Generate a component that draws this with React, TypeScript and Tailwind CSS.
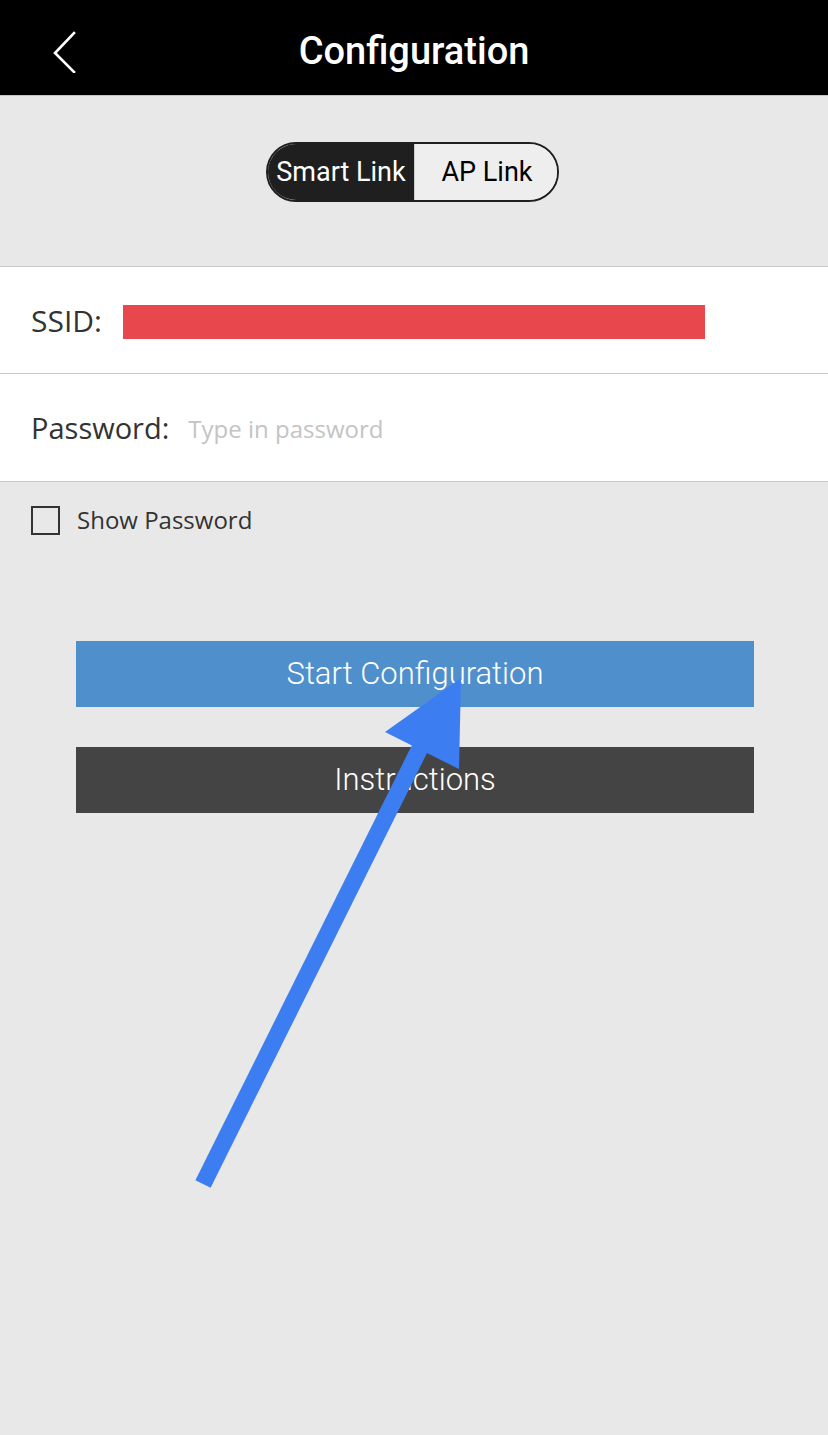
import { useState } from "react";

function BackChevron(): JSX.Element {
  return (
    <svg width="30" height="44" viewBox="0 0 30 44" fill="none">
      <path d="M21 4 L2 24 L21 43" stroke="#fff" strokeWidth="2.6" strokeLinecap="square" />
    </svg>
  );
}

function Arrow(): JSX.Element {
  // annotation arrow drawn over the page
  return (
    <svg className="pointer-events-none absolute left-0 top-0" width="828" height="1435" viewBox="0 0 828 1435">
      <line x1="420" y1="748" x2="203" y2="1184" stroke="#3c7ef2" strokeWidth="17" />
      <polygon points="461,678 385,732 459,769" fill="#3c7ef2" />
    </svg>
  );
}

export default function App(): JSX.Element {
  const [mode, setMode] = useState<"smart" | "ap">("smart");
  const [showPassword, setShowPassword] = useState(false);

  return (
    <div className="relative min-h-[1435px] w-full bg-[#e8e8e8] font-['Roboto','Liberation_Sans',sans-serif]">
      <header className="relative flex h-[96px] items-center justify-center border-b border-[#c6c6c6] bg-black">
        <button className="absolute left-[53px] top-[29px]">
          <BackChevron />
        </button>
        <h1 className="pt-[8px] text-[38px] font-medium text-white">Configuration</h1>
      </header>

      <div className="flex justify-center pr-[3px] pt-[46px] pb-[64px]">
        <div className="flex h-[60px] w-[293px] overflow-hidden rounded-full border-2 border-[#1f1f1f] text-[27px]">
          <button
            onClick={() => setMode("smart")}
            className={`flex w-[147px] items-center justify-center border-r border-[#cfcfcf] ${mode === "smart" ? "bg-[#1f1f1f] text-white" : "bg-[#eeeeee] text-black"}`}
          >
            Smart Link
          </button>
          <button
            onClick={() => setMode("ap")}
            className={`flex flex-1 items-center justify-center pl-[2px] ${mode === "ap" ? "bg-[#1f1f1f] text-white" : "bg-[#eeeeee] text-black"}`}
          >
            AP Link
          </button>
        </div>
      </div>

      <div className="border-t border-[#c8c8c8] bg-white font-['Open_Sans','Noto_Sans',sans-serif] text-[#333]">
        <div className="flex h-[107px] items-center border-b border-[#c8c8c8] pl-[31px]">
          <span className="text-[30px]">SSID:</span>
          <div className="ml-[21px] mt-[4px] h-[34px] w-[582px] bg-[#e8474d]" />
        </div>
        <div className="flex h-[108px] items-center border-b border-[#c8c8c8] pl-[31px]">
          <span className="text-[29px]">Password:</span>
          <input
            type={showPassword ? "text" : "password"}
            placeholder="Type in password"
            className="ml-[19px] flex-1 bg-transparent pt-[2px] text-[24px] outline-none placeholder:text-[#c4c4c4]"
          />
        </div>
      </div>

      <label className="flex items-center gap-[17px] pl-[31px] pt-[20px] font-['Open_Sans','Noto_Sans',sans-serif] text-[24px] text-[#333]">
        <span
          onClick={() => setShowPassword(!showPassword)}
          className="block h-[29px] w-[29px] border-2 border-[#333]"
        />
        Show Password
      </label>

      <div className="flex flex-col gap-[40px] pl-[76px] pr-[74px] pt-[103px]">
        <button className="flex h-[66px] items-center justify-center bg-[#4f90cc] text-[31px] font-light text-white">
          Start Configuration
        </button>
        <button className="flex h-[66px] items-center justify-center bg-[#444444] text-[31px] font-light text-white">
          Instructions
        </button>
      </div>

      <Arrow />
    </div>
  );
}
